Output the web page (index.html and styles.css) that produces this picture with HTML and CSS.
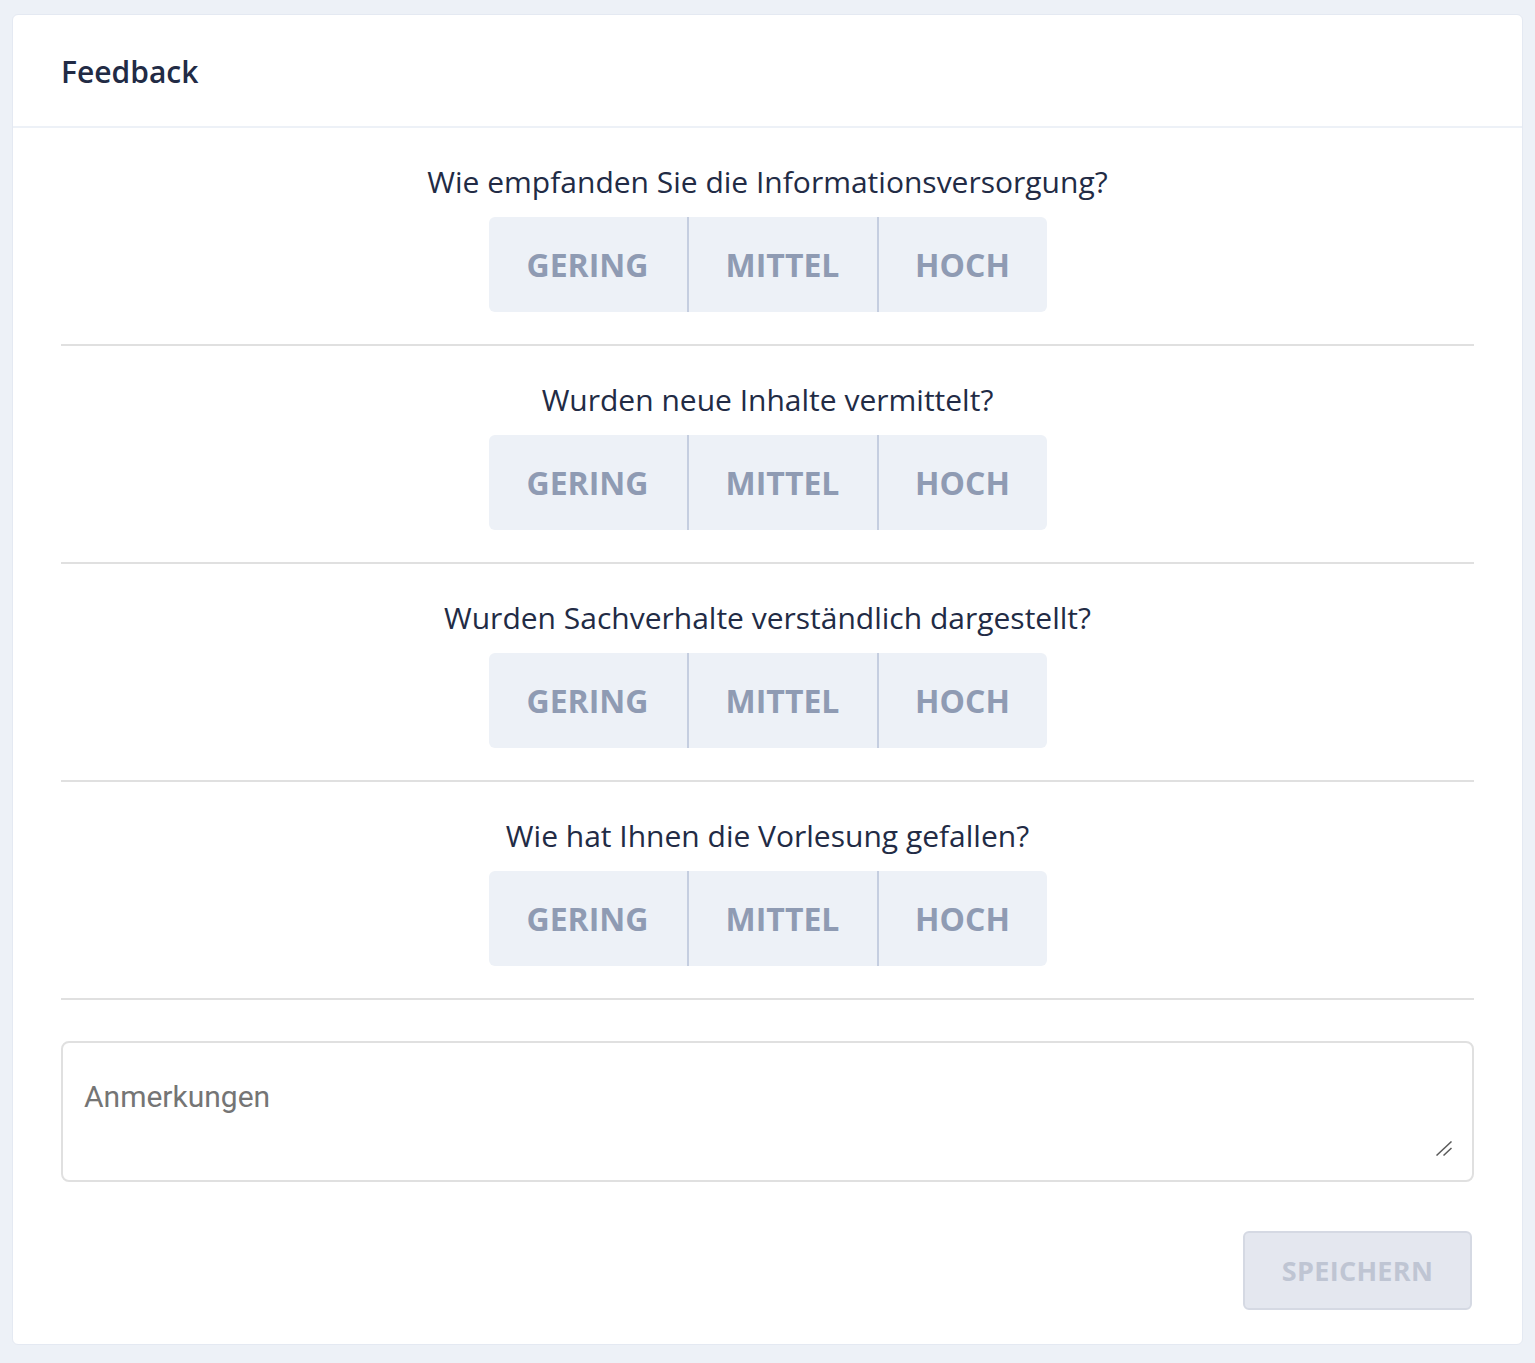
FILE: index.html
```html
<!DOCTYPE html>
<html lang="de">
<head>
<meta charset="utf-8">
<title>Feedback</title>
<link rel="stylesheet" href="styles.css">
</head>
<body>
<div class="card">
  <div class="card-header">Feedback</div>
  <div class="card-body">
    <div class="question">
      <div class="question-text">Wie empfanden Sie die Informationsversorgung?</div>
      <div class="btn-group">
        <button class="opt opt-1">GERING</button><button class="opt opt-2">MITTEL</button><button class="opt opt-3">HOCH</button>
      </div>
    </div>
    <div class="question">
      <div class="question-text">Wurden neue Inhalte vermittelt?</div>
      <div class="btn-group">
        <button class="opt opt-1">GERING</button><button class="opt opt-2">MITTEL</button><button class="opt opt-3">HOCH</button>
      </div>
    </div>
    <div class="question">
      <div class="question-text">Wurden Sachverhalte verständlich dargestellt?</div>
      <div class="btn-group">
        <button class="opt opt-1">GERING</button><button class="opt opt-2">MITTEL</button><button class="opt opt-3">HOCH</button>
      </div>
    </div>
    <div class="question">
      <div class="question-text">Wie hat Ihnen die Vorlesung gefallen?</div>
      <div class="btn-group">
        <button class="opt opt-1">GERING</button><button class="opt opt-2">MITTEL</button><button class="opt opt-3">HOCH</button>
      </div>
    </div>
    <div class="notes-wrap">
      <textarea class="notes" placeholder="Anmerkungen"></textarea>
      <svg class="resize-handle" width="16" height="15" viewBox="0 0 16 15" aria-hidden="true">
        <line x1="0.5" y1="14.5" x2="15.5" y2="0.5" stroke="#5a5a5a" stroke-width="1.5"/>
        <line x1="7.5" y1="14.5" x2="15.5" y2="7" stroke="#5a5a5a" stroke-width="1.5"/>
      </svg>
    </div>
    <div class="actions">
      <button class="save" disabled>SPEICHERN</button>
    </div>
  </div>
</div>
</body>
</html>
```

FILE: styles.css
```css
html, body {
  margin: 0;
  padding: 0;
}
body {
  background: #edf1f7;
  padding: 14px 12px 19px 12px;
  font-family: "Open Sans", "Liberation Sans", sans-serif;
  color: #222b45;
}
.card {
  background: #ffffff;
  border: 1px solid #e4e9f2;
  border-radius: 6px;
}
.card-header {
  height: 113px;
  box-sizing: border-box;
  padding: 2px 48px 0 48px;
  display: flex;
  align-items: center;
  font-size: 30px;
  font-weight: 600;
  border-bottom: 2px solid #edf1f7;
}
.card-body {
  padding: 0 48px 34px 48px;
}
.question {
  display: flex;
  flex-direction: column;
  align-items: center;
  padding: 32px 0 32px 0;
  border-bottom: 2px solid #e0e0e0;
}
.question-text {
  font-size: 30px;
  line-height: 44px;
  margin-bottom: 13px;
  color: #222b45;
}
.btn-group {
  display: flex;
  height: 95px;
  border-radius: 6px;
  overflow: hidden;
}
.opt {
  border: none;
  margin: 0;
  background: #edf1f7;
  color: #8f9bb3;
  font-family: "Open Sans", "Liberation Sans", sans-serif;
  font-weight: 700;
  font-size: 32px;
  padding: 0;
  height: 95px;
  box-sizing: border-box;
}
.opt-1 { width: 200px; border-right: 2px solid #c5cee0; }
.opt-2 { width: 190px; border-right: 2px solid #c5cee0; }
.opt-3 { width: 168px; }
.notes-wrap {
  position: relative;
  margin-top: 41px;
}
.notes {
  display: block;
  box-sizing: border-box;
  width: 100%;
  height: 141px;
  border: 2px solid #e0e0e0;
  border-radius: 8px;
  padding: 36px 21px;
  font-family: Roboto, "Liberation Sans", sans-serif;
  font-size: 30px;
  line-height: 36px;
  color: #222b45;
  resize: none;
  outline: none;
}
.notes::placeholder {
  color: #757575;
}
.resize-handle {
  position: absolute;
  right: 22px;
  bottom: 26px;
}
.actions {
  display: flex;
  justify-content: flex-end;
  margin-top: 49px;
  padding-right: 2px;
}
.save {
  width: 229px;
  height: 79px;
  box-sizing: border-box;
  background: #e4e7ef;
  border: 2px solid #d5d9e3;
  border-radius: 6px;
  color: #bfc5d3;
  font-family: "Open Sans", "Liberation Sans", sans-serif;
  font-weight: 700;
  font-size: 27px;
  letter-spacing: 0.3px;
}
```
